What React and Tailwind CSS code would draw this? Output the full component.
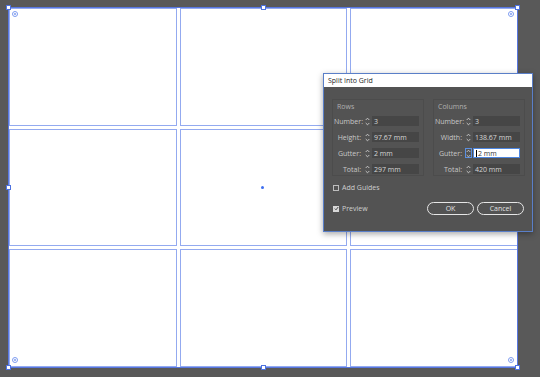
import React from "react";

const font = { fontFamily: '"Open Sans", "Noto Sans", sans-serif' };

const Stepper = ({ focused }) => (
  <div
    className={`w-[7px] h-[10px] flex items-center justify-center ${
      focused ? "border border-[#5b8fe0]" : ""
    }`}
  >
    <svg width="5" height="9" viewBox="0 0 5 9" fill="none" stroke="#cfcfcf" strokeWidth="0.9">
      <path d="M0.7 3 L2.5 1.2 L4.3 3" />
      <path d="M0.7 6 L2.5 7.8 L4.3 6" />
    </svg>
  </div>
);

const Field = ({ label, value, focused }) => (
  <div className="flex items-center h-[10px]">
    <span className="w-[27px] text-right text-[7px] text-[#c8c8c8] leading-none">{label}:</span>
    <div className="ml-[2px] w-[8px] flex justify-center">
      <Stepper focused={focused} />
    </div>
    {focused ? (
      <div className="ml-[1px] w-[47px] h-[10px] bg-white border border-[#4d86e0] flex items-center pl-[2px] text-[7px] text-[#333] leading-none">
        <span className="w-px h-[7px] bg-black mr-px" />2 mm
      </div>
    ) : (
      <div className="ml-[1px] w-[47px] h-[10px] bg-[#464646] flex items-center pl-[2px] text-[7px] text-[#d6d6d6] leading-none">
        {value}
      </div>
    )}
  </div>
);

const Group = ({ title, fields }) => (
  <div className="w-[92px] h-[77px] border border-[#4c4c4c] pt-[3px] pl-[1px]">
    <div className="text-[7px] text-[#b0b0b0] leading-none ml-[3px]">{title}</div>
    <div className="mt-[6px] flex flex-col gap-[6px]">
      {fields.map((f) => (
        <Field key={f.label} {...f} />
      ))}
    </div>
  </div>
);

const Handle = ({ className }) => (
  <div className={`absolute w-[5px] h-[5px] bg-white border border-[#4d72e0] ${className}`} />
);

const CornerMark = ({ className }) => (
  <div
    className={`absolute w-[6px] h-[6px] rounded-full border border-[#7e9cf0] flex items-center justify-center ${className}`}
  >
    <div className="w-[2px] h-[2px] rounded-full bg-[#7e9cf0]" />
  </div>
);

export default function App() {
  const cells = Array.from({ length: 9 });

  return (
    <div className="w-[540px] h-[377px] bg-[#595959] relative overflow-hidden" style={font}>
      {/* Artboard */}
      <div className="absolute left-[8px] top-[7px] w-[510px] h-[360px] bg-white border-l border-t border-[#5877e0]">
        <div className="grid grid-cols-3 grid-rows-3 gap-[3px] w-full h-full">
          {cells.map((_, i) => (
            <div key={i} className="border border-[#93aaf0]" />
          ))}
        </div>
      </div>
      <div className="absolute left-[517px] top-[7px] w-px h-[361px] bg-[#5877e0]" />
      <div className="absolute left-[8px] top-[367px] w-[510px] h-px bg-[#5877e0]" />

      {/* selection handles */}
      <Handle className="left-[6px] top-[5px]" />
      <Handle className="left-[261px] top-[5px]" />
      <Handle className="left-[515px] top-[5px]" />
      <Handle className="left-[6px] top-[185px]" />
      <Handle className="left-[515px] top-[185px]" />
      <Handle className="left-[6px] top-[365px]" />
      <Handle className="left-[261px] top-[365px]" />
      <Handle className="left-[515px] top-[365px]" />
      <div className="absolute left-[261px] top-[186px] w-[3px] h-[3px] rounded-full bg-[#3d6ef0]" />

      <CornerMark className="left-[12px] top-[11px]" />
      <CornerMark className="left-[508px] top-[11px]" />
      <CornerMark className="left-[12px] top-[357px]" />
      <CornerMark className="left-[508px] top-[357px]" />

      {/* Dialog */}
      <div className="absolute left-[323px] top-[73px] w-[210px] h-[159px] bg-[#535353] border border-[#5a7fc8] shadow-[0_2px_6px_rgba(0,0,0,0.35)] flex flex-col">
        <div className="h-[13px] bg-white flex items-center pl-[4px] text-[7px] text-[#1e1e1e] leading-none">
          Split Into Grid
        </div>
        <div className="flex gap-[9px] pl-[8px] pt-[12px]">
          <Group
            title="Rows"
            fields={[
              { label: "Number", value: "3" },
              { label: "Height", value: "97.67 mm" },
              { label: "Gutter", value: "2 mm" },
              { label: "Total", value: "297 mm" },
            ]}
          />
          <Group
            title="Columns"
            fields={[
              { label: "Number", value: "3" },
              { label: "Width", value: "138.67 mm" },
              { label: "Gutter", value: "2 mm", focused: true },
              { label: "Total", value: "420 mm" },
            ]}
          />
        </div>
        <div className="flex items-center pl-[9px] mt-[8px] text-[7px] text-[#cfcfcf] leading-none">
          <div className="w-[6px] h-[6px] border border-[#bdbdbd] mr-[3px]" />
          Add Guides
        </div>
        <div className="flex items-center pl-[9px] pr-[8px] mt-[11px] text-[7px] text-[#cfcfcf] leading-none">
          <div className="w-[6px] h-[6px] bg-[#d8d8d8] mr-[3px] flex items-center justify-center">
            <svg width="5" height="5" viewBox="0 0 5 5" fill="none" stroke="#444" strokeWidth="1">
              <path d="M0.8 2.6 L2 3.8 L4.2 1" />
            </svg>
          </div>
          Preview
          <div className="ml-auto flex gap-[3px]">
            <button className="w-[47px] h-[13px] rounded-full border-[1.5px] border-[#e6e6e6] text-[7px] text-[#e0e0e0] leading-none">
              OK
            </button>
            <button className="w-[47px] h-[13px] rounded-full border-[1.5px] border-[#e6e6e6] text-[7px] text-[#e0e0e0] leading-none">
              Cancel
            </button>
          </div>
        </div>
      </div>
    </div>
  );
}
